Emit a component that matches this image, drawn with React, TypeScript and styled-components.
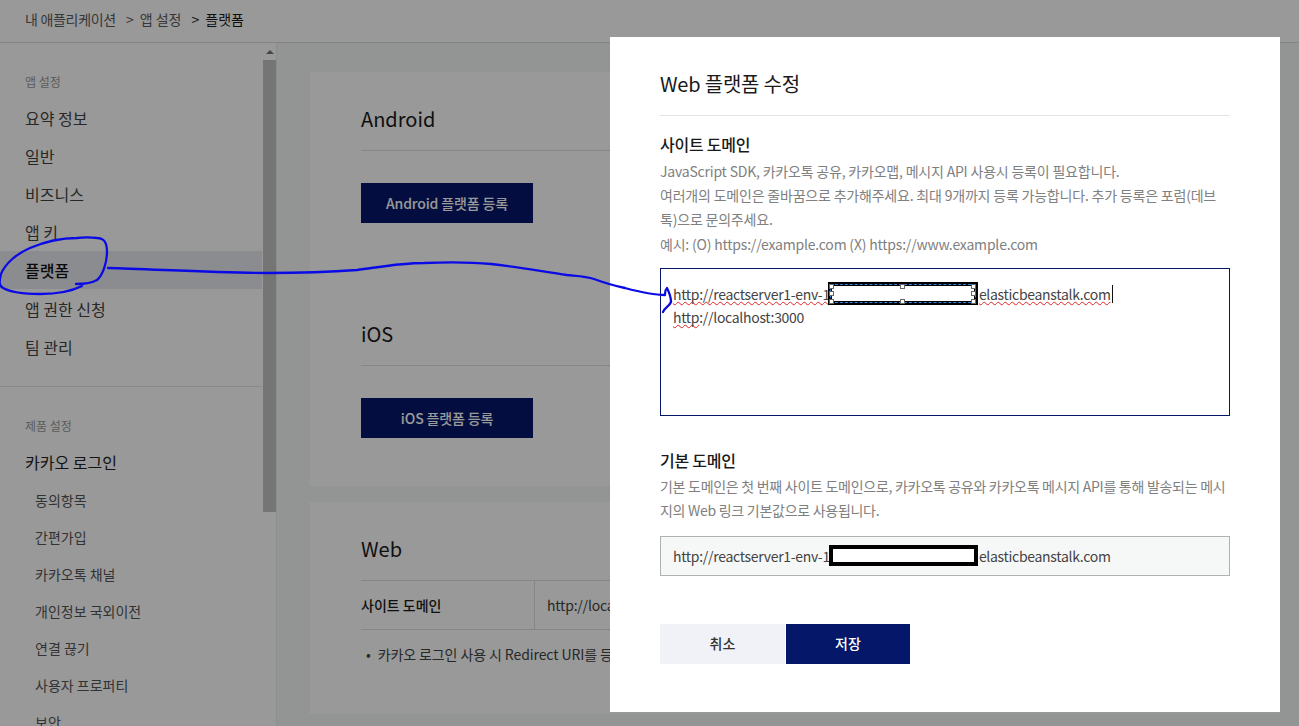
import React from 'react';
import styled, { createGlobalStyle } from 'styled-components';

const Global = createGlobalStyle`
  html, body { margin: 0; padding: 0; height: 100%; overflow: hidden; background: #fff; }
  body { font-family: "Noto Sans CJK KR", "Noto Sans", sans-serif; color: #1a1a1a; }
  * { box-sizing: border-box; }
`;

const Page = styled.div`
  width: 1299px; height: 726px; display: flex; flex-direction: column; overflow: hidden; position: relative;
`;
const Header = styled.header`
  height: 43px; flex: none; border-bottom: 1px solid #dcdcdc; padding: 0 0 5px 25px;
  display: flex; align-items: center; font-size: 14px; color: #5c5c5c;
`;
const Crumb = styled.span<{ $current?: boolean; $tight?: boolean }>`
  color: ${p => (p.$current ? '#1a1a1a' : '#5c5c5c')};
  letter-spacing: ${p => (p.$tight ? -0.3 : 0)}px;
  margin-right: 10px;
`;
const CrumbArrow = styled.span`
  margin-right: 6px;
`;
const Body = styled.div`
  flex: 1; display: flex; min-height: 0;
`;
const Sidebar = styled.aside`
  width: 277px; flex: none; display: flex; border-right: 1px solid #ececec; overflow: hidden;
`;
const Nav = styled.nav`
  width: 262px; flex: none; padding-top: 27px;
`;
const Scrollbar = styled.div`
  width: 14px; margin-left: 1px; flex: none; display: flex; flex-direction: column; align-items: center;
`;
const ScrollArrow = styled.div`
  margin-top: 7px; width: 0; height: 0;
  border-left: 4px solid transparent; border-right: 4px solid transparent; border-bottom: 4px solid #777;
`;
const ScrollThumb = styled.div`
  width: 14px; height: 452px; margin-top: 6px; background: #c4c4c4;
`;
const SectionLabel = styled.div`
  padding-left: 25px; font-size: 12px; line-height: 24px; color: #999; height: 24px;
`;
const NavItem = styled.div<{ $active?: boolean }>`
  height: 38.1px; padding-left: 25px; display: flex; align-items: center; font-size: 16px;
  color: ${p => (p.$active ? '#111' : '#444')};
  font-weight: ${p => (p.$active ? 500 : 400)};
  background: ${p => (p.$active ? '#e8eaf0' : 'transparent')};
`;
const NavList = styled.div`
  margin-top: 5px;
`;
const ProductItem = styled(NavItem)`
  margin-top: 5.4px; color: #222;
`;
const Divider = styled.div`
  height: 1px; background: #e4e4e4; margin: 20px 0 27px;
`;
const SubItem = styled.div`
  height: 37px; padding-left: 35px; display: flex; align-items: center; font-size: 14px; color: #555;
`;
const Main = styled.main`
  flex: 1; background: #f6f8f7; padding: 29px 0 0 33px; display: flex; flex-direction: column; gap: 16px; min-width: 0;
`;
const Card = styled.section`
  background: #fff; padding: 0 51px; width: 970px;
`;
const PlatformBlock = styled.div<{ $height: number }>`
  padding-top: 32px; height: ${p => p.$height}px;
`;
const CardTitle = styled.h2`
  margin: 0; font-size: 20px; font-weight: 400; line-height: 30px; height: 47px; color: #1a1a1a;
  border-bottom: 1px solid #e0e0e0;
`;
const RegisterButton = styled.div`
  margin-top: 32px; width: 172px; height: 40px; padding-bottom: 1px; background: #051769; color: #fff;
  font-size: 14px; font-weight: 500; letter-spacing: -0.15px; display: flex; align-items: center; justify-content: center;
`;
const InfoRow = styled.div`
  display: flex; height: 49px; border-bottom: 1px solid #e0e0e0; font-size: 14px; align-items: stretch;
`;
const InfoHead = styled.div`
  width: 174px; padding-bottom: 1px; font-weight: 500; display: flex; align-items: center; border-right: 1px solid #e0e0e0; color: #1a1a1a;
`;
const InfoValue = styled.div`
  padding: 0 0 1px 12px; display: flex; align-items: center; color: #444; letter-spacing: -0.2px;
`;
const Note = styled.div`
  font-size: 14px; color: #444; margin-top: 12px; padding-left: 5px; display: flex; gap: 7px; line-height: 24px; white-space: nowrap; letter-spacing: -0.1px;
`;
const Overlay = styled.div`
  position: absolute; inset: 0; background: rgba(0, 0, 0, 0.4);
`;
const Modal = styled.div`
  position: absolute; left: 610px; top: 37px; width: 670px; height: 675px; background: #fff; padding: 32px 50px 0;
`;
const ModalTitle = styled.h1`
  margin: 0; font-size: 20px; font-weight: 400; line-height: 30px; color: #1a1a1a; height: 47px;
  border-bottom: 1px solid #e4e4e4; letter-spacing: -0.2px;
`;
const FieldLabel = styled.h3`
  margin: 15px 0 0; font-size: 16px; font-weight: 500; line-height: 26px; color: #1a1a1a; letter-spacing: -0.25px;
`;
const Desc = styled.p<{ $tight?: boolean }>`
  margin: ${p => (p.$tight ? 1 : 2)}px 0 0; font-size: 14px; line-height: 24.2px; color: #808080;
  letter-spacing: ${p => (p.$tight ? -0.28 : -0.2)}px;
`;
const Textarea = styled.div`
  margin-top: 12px; height: 148px; border: 1px solid #051769; padding: 13px 12px 0; font-size: 14px; line-height: 24px; color: #444; letter-spacing: -0.3px;
`;
const Typo = styled.span`
  text-decoration: underline wavy #e02424 1.3px; text-underline-offset: 1px; text-decoration-skip-ink: none;
`;
const Line = styled.div`
  white-space: nowrap; display: flex; align-items: center; height: 24px;
`;
const LastLine = styled(Line)`
  margin-top: -1px;
`;
const Caret = styled.span`
  display: inline-block; width: 1px; height: 18px; background: #111; margin-left: 1px;
`;
const SelectedRedaction = styled.span`
  position: relative; display: inline-block; width: 150px; height: 23px; flex: none; margin: 0 1px 0 -2px;
  border: 4px solid #000; background: #fff; outline: 1px dashed #2f86e6; outline-offset: -3px;
`;
const Handle = styled.i<{ $x: number; $y: number }>`
  position: absolute; width: 5px; height: 5px; background: #fff; border: 1px solid #666;
  left: calc(${p => p.$x}% - 2.5px); top: calc(${p => p.$y}% - 2.5px);
`;
const LabelSpaced = styled(FieldLabel)`
  margin-top: 31px;
`;
const ReadOnly = styled.div`
  margin-top: 13.6px; height: 40px; border: 1px solid #b0b0b0; background: #f6f8f7; padding-left: 12px;
  display: flex; align-items: center; font-size: 14px; color: #444; white-space: nowrap; letter-spacing: -0.3px;
`;
const Redaction = styled.span`
  display: inline-block; flex: none; width: 149px; height: 21px; border: 4px solid #000; background: #fff; margin: 0 1px 0 -1px;
`;
const Buttons = styled.div`
  margin-top: 48px; display: flex; gap: 1px;
`;
const ModalButton = styled.div<{ $primary?: boolean }>`
  width: ${p => (p.$primary ? 124 : 125)}px; height: 40px; padding-bottom: 1px; display: flex; align-items: center; justify-content: center;
  font-size: 14px; font-weight: 500;
  background: ${p => (p.$primary ? '#051769' : '#f1f2f8')};
  color: ${p => (p.$primary ? '#fff' : '#333')};
`;
const Ink = styled.svg`
  position: absolute; left: 0; top: 0; pointer-events: none;
`;

const topItems = ['요약 정보', '일반', '비즈니스', '앱 키', '플랫폼', '앱 권한 신청', '팀 관리'];
const subItems = ['동의항목', '간편가입', '카카오톡 채널', '개인정보 국외이전', '연결 끊기', '사용자 프로퍼티', '보안'];
const handles = [[0, 0], [50, 0], [100, 0], [0, 50], [100, 50], [0, 100], [50, 100], [100, 100]];

export default function App() {
  return (
    <Page>
      <Global />
      <Header>
        <Crumb $tight>내 애플리케이션</Crumb>
        <Crumb><CrumbArrow>&gt;</CrumbArrow>앱 설정</Crumb>
        <Crumb $current><CrumbArrow>&gt;</CrumbArrow>플랫폼</Crumb>
      </Header>
      <Body>
        <Sidebar>
          <Nav>
            <SectionLabel>앱 설정</SectionLabel>
            <NavList>
              {topItems.map(t => (
                <NavItem key={t} $active={t === '플랫폼'}>{t}</NavItem>
              ))}
            </NavList>
            <Divider />
            <SectionLabel>제품 설정</SectionLabel>
            <ProductItem>카카오 로그인</ProductItem>
            {subItems.map(t => (
              <SubItem key={t}>{t}</SubItem>
            ))}
          </Nav>
          <Scrollbar>
            <ScrollArrow />
            <ScrollThumb />
          </Scrollbar>
        </Sidebar>
        <Main>
          <Card>
            <PlatformBlock $height={215}>
              <CardTitle>Android</CardTitle>
              <RegisterButton>Android 플랫폼 등록</RegisterButton>
            </PlatformBlock>
            <PlatformBlock $height={199}>
              <CardTitle>iOS</CardTitle>
              <RegisterButton>iOS 플랫폼 등록</RegisterButton>
            </PlatformBlock>
          </Card>
          <Card>
            <PlatformBlock $height={212}>
              <CardTitle>Web</CardTitle>
              <InfoRow>
                <InfoHead>사이트 도메인</InfoHead>
                <InfoValue>http://localhost:3000</InfoValue>
              </InfoRow>
              <Note>
                <span>•</span>
                <span>카카오 로그인 사용 시 Redirect URI를 등록해야 합니다.</span>
              </Note>
            </PlatformBlock>
          </Card>
        </Main>
      </Body>
      <Overlay />
      <Modal>
        <ModalTitle>Web 플랫폼 수정</ModalTitle>
        <FieldLabel>사이트 도메인</FieldLabel>
        <Desc>
          JavaScript SDK, 카카오톡 공유, 카카오맵, 메시지 API 사용시 등록이 필요합니다.
          <br />
          여러개의 도메인은 줄바꿈으로 추가해주세요. 최대 9개까지 등록 가능합니다. 추가 등록은 포럼(데브톡)으로 문의주세요.
          <br />
          예시: (O) https://example.com (X) https://www.example.com
        </Desc>
        <Textarea>
          <Line>
            <Typo>http://reactserver1-env-1</Typo>
            <SelectedRedaction>
              {handles.map(([x, y]) => (
                <Handle key={`${x}-${y}`} $x={x} $y={y} />
              ))}
            </SelectedRedaction>
            <Typo>elasticbeanstalk.com</Typo>
            <Caret />
          </Line>
          <LastLine>
            <span><Typo>http</Typo>://localhost:3000</span>
          </LastLine>
        </Textarea>
        <LabelSpaced>기본 도메인</LabelSpaced>
        <Desc $tight>
          기본 도메인은 첫 번째 사이트 도메인으로, 카카오톡 공유와 카카오톡 메시지 API를 통해 발송되는 메시지의 Web 링크 기본값으로 사용됩니다.
        </Desc>
        <ReadOnly>
          http://reactserver1-env-1
          <Redaction />
          elasticbeanstalk.com
        </ReadOnly>
        <Buttons>
          <ModalButton>취소</ModalButton>
          <ModalButton $primary>저장</ModalButton>
        </Buttons>
      </Modal>
      <Ink width="1299" height="726" viewBox="0 0 1299 726" fill="none" stroke="#0a0ae6" strokeWidth="2.3" strokeLinecap="round" strokeLinejoin="round">
        <path d="M76 284 C84 284 92 283 97 280 C103 275 107 262 107 252 C107 242 104 238 97 238 C90 237 84 237 77 238 C62 238 44 242 30 248 C16 254 5 264 1 274 C-1 282 -1 286 3 288 C12 293 28 294 40 294 C56 294 72 291 82 286" />
        <path d="M108 268 C150 269 220 273 268 273 C300 273 330 272 357 270 C380 267 400 263 424 263 C450 262 470 262 491 264 C520 267 545 272 567 275 C578 276 586 276 594 279 C605 283 615 286 625 288 C640 292 655 295 665 295" />
        <path d="M665 294 C665 291 666 289 667 288 C669 292 671 297 671 302 C669 307 664 308 663 312" />
      </Ink>
    </Page>
  );
}
